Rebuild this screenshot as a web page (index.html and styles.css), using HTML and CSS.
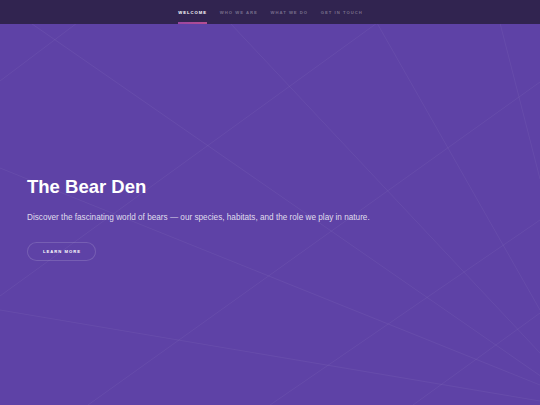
FILE: index.html
```html
<!DOCTYPE html>
<html lang="en">
<head>
<meta charset="utf-8">
<title>The Bear Den</title>
<link rel="stylesheet" href="styles.css">
</head>
<body>
<div class="page">
  <svg class="bg-lines" viewBox="0 0 540 405" preserveAspectRatio="none" aria-hidden="true">
    <g stroke="rgba(255,255,255,0.065)" stroke-width="0.8" fill="none">
      <line x1="77" y1="23" x2="0" y2="81"/>
      <line x1="31.7" y1="23.7" x2="540" y2="375.6"/>
      <line x1="377" y1="23" x2="0" y2="296"/>
      <line x1="230" y1="23" x2="540" y2="353"/>
      <line x1="377" y1="23" x2="540" y2="310"/>
      <line x1="500" y1="23" x2="540" y2="179"/>
      <line x1="540" y1="82" x2="88" y2="405"/>
      <line x1="0" y1="168" x2="540" y2="385"/>
      <line x1="0" y1="310" x2="540" y2="401"/>
      <line x1="540" y1="220" x2="270" y2="405"/>
      <line x1="540" y1="313" x2="413" y2="405"/>
    </g>
  </svg>
  <nav class="nav">
    <a class="nav-link active" href="#intro">Welcome</a>
    <a class="nav-link" href="#one">Who We Are</a>
    <a class="nav-link" href="#two">What We Do</a>
    <a class="nav-link" href="#three">Get In Touch</a>
  </nav>
  <section class="hero" id="intro">
    <h1 class="title">The Bear Den</h1>
    <p class="lead">Discover the fascinating world of bears — our species, habitats, and the role we play in nature.</p>
    <div class="actions">
      <a class="button" href="#one">Learn More</a>
    </div>
  </section>
</div>
</body>
</html>
```

FILE: styles.css
```css
* { box-sizing: border-box; }

html, body {
  margin: 0;
  padding: 0;
  background: #5e42a6;
}

body {
  font-family: "Liberation Sans", Arial, Helvetica, sans-serif;
  color: rgba(255, 255, 255, 0.8);
}

.page {
  position: relative;
  width: 540px;
  height: 405px;
  overflow: hidden;
  background: #5e42a6;
}

.bg-lines {
  position: absolute;
  left: 0;
  top: 0;
  width: 540px;
  height: 405px;
  z-index: 0;
}

.nav {
  position: relative;
  z-index: 2;
  height: 24px;
  background: #312450;
  display: flex;
  justify-content: center;
  align-items: stretch;
  gap: 12.7px;
  padding-left: 1px;
}

.nav-link {
  position: relative;
  display: flex;
  align-items: center;
  font-size: 4.2px;
  font-weight: bold;
  letter-spacing: 1px;
  text-transform: uppercase;
  text-decoration: none;
  color: rgba(255, 255, 255, 0.35);
  padding-top: 0.5px;
}

.nav-link.active {
  color: #ffffff;
}

.nav-link.active::after {
  content: "";
  position: absolute;
  left: 0;
  right: 0;
  bottom: 0.5px;
  height: 1.5px;
  background: linear-gradient(to right, #9a46a0, #b74e91);
}

.hero {
  position: relative;
  z-index: 1;
  padding: 153.6px 27px 0 27px;
  display: flex;
  flex-direction: column;
  align-items: flex-start;
}

.title {
  margin: 0;
  font-size: 18.5px;
  line-height: 1;
  font-weight: bold;
  color: #ffffff;
}

.lead {
  margin: 17.9px 0 0 0;
  font-size: 8.2px;
  line-height: 1;
  color: rgba(255, 255, 255, 0.82);
  white-space: nowrap;
}

.actions {
  margin-top: 19.8px;
}

.button {
  display: flex;
  align-items: center;
  justify-content: center;
  width: 69px;
  height: 19.4px;
  border-radius: 10px;
  box-shadow: inset 0 0 0 1px rgba(255, 255, 255, 0.15);
  font-size: 4.2px;
  font-weight: bold;
  letter-spacing: 1px;
  text-transform: uppercase;
  text-decoration: none;
  color: #ffffff;
  padding-left: 1px;
}
```
